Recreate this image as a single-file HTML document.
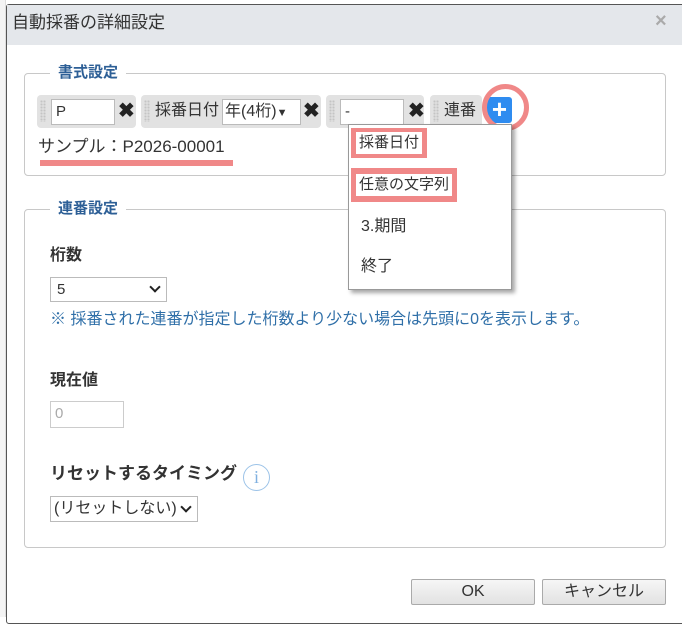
<!DOCTYPE html>
<html><head><meta charset="utf-8"><style>
*{box-sizing:border-box}
body{margin:0;width:682px;height:617px;overflow:hidden;background:#fff;font-family:"Liberation Sans","Noto Sans CJK JP",sans-serif;color:#333;position:relative}
.a{position:absolute}
.dlg{left:6px;top:4px;width:680px;height:620px;border:1px solid #555;background:#fff;border-radius:3px}
.tb{left:7px;top:5px;width:676px;height:40px;background:#e4e7eb}
.fs{border:1px solid #c8c8c8;border-radius:4px}
.lg{background:#fff;padding:0 8px;font-weight:bold;color:#2d5f96;font-size:15px;line-height:20px}
.chip{background:#e2e2e2;border-radius:4px;height:33px;top:95px}
.inp{background:#fff;border:1px solid #bbb;height:26px;top:99px;font-size:15px;line-height:24px;padding-left:4px}
.x{font-size:20px;font-weight:bold;top:98px;line-height:26px;color:#222}
.t{font-size:15px;line-height:20px}
.grip{width:6px;height:22px;top:100px;background:radial-gradient(circle,#c4c4c4 1px,transparent 1.2px) 0 0/3px 3px}
.btn{border:1px solid #aaa;border-radius:2px;background:linear-gradient(#f6f6f6,#e2e2e2);height:26px;top:579px;font-size:16px;text-align:center;line-height:24px}
.hl{background:#f08888;padding:4px 5px}
.hl span{background:#fff;display:block;padding:0 3px;font-size:15px;line-height:22px}
.chev{position:absolute;width:8px;height:8px;border-right:2px solid #222;border-bottom:2px solid #222;transform:rotate(45deg)}
</style></head><body>
<div class="a" style="left:0;top:0;width:6px;height:617px;background:#f4f4f4;border-right:1px solid #ddd"></div>
<div class="a dlg"></div>
<div class="a tb"></div>
<div class="a" style="left:12px;top:12px;font-size:17px;line-height:22px;color:#333">自動採番の詳細設定</div>
<div class="a" style="left:655px;top:10px;font-size:20px;color:#aaa;font-weight:bold">×</div>

<div class="a fs" style="left:24px;top:73px;width:642px;height:103px"></div>
<div class="a lg" style="left:50px;top:63px">書式設定</div>

<div class="a chip" style="left:37px;width:99px"></div>
<div class="a grip" style="left:40px"></div>
<div class="a inp" style="left:51px;width:64px">P</div>
<div class="a x" style="left:118px">✖</div>
<div class="a chip" style="left:141px;width:180px"></div>
<div class="a grip" style="left:144px"></div>
<div class="a t" style="left:155px;top:101px;font-size:16px">採番日付</div>
<div class="a inp" style="left:222px;width:79px;padding-left:2px;font-size:16px">年(4桁)<span style="font-size:11px">▼</span></div>
<div class="a x" style="left:303px">✖</div>
<div class="a chip" style="left:326px;width:98px"></div>
<div class="a grip" style="left:329px"></div>
<div class="a inp" style="left:340px;width:64px">-</div>
<div class="a x" style="left:408px">✖</div>
<div class="a chip" style="left:430px;width:52px"></div>
<div class="a grip" style="left:433px"></div>
<div class="a t" style="left:444px;top:101px;font-size:16px">連番</div>
<div class="a" style="left:487px;top:97px;width:25px;height:26px;background:#2f8cf0;border-radius:3px;color:#fff;font-size:26px;font-weight:bold;text-align:center;line-height:25px">+</div>
<div class="a" style="left:482px;top:84px;width:47px;height:47px;border:5px solid #f08888;border-radius:50%"></div>

<div class="a" style="left:38px;top:136px;font-size:17px;line-height:22px">サンプル：P2026-00001</div>
<div class="a" style="left:40px;top:160px;width:193px;height:6px;background:#f08888"></div>

<div class="a fs" style="left:24px;top:209px;width:642px;height:339px"></div>
<div class="a lg" style="left:50px;top:199px">連番設定</div>

<div class="a" style="left:50px;top:245px;font-size:16px;font-weight:bold;line-height:22px">桁数</div>
<div class="a inp" style="left:50px;top:277px;width:117px;height:25px;font-size:15px;padding-left:6px">5<span class="chev" style="right:7px;top:5px"></span></div>
<div class="a" style="left:50px;top:310px;font-size:16px;color:#2f6fa8;line-height:20px">※ 採番された連番が指定した桁数より少ない場合は先頭に0を表示します。</div>
<div class="a" style="left:50px;top:370px;font-size:16px;font-weight:bold;line-height:22px">現在値</div>
<div class="a inp" style="left:50px;top:401px;width:74px;height:27px;color:#aaa;border-color:#ccc">0</div>
<div class="a" style="left:50px;top:463px;font-size:17px;font-weight:bold;line-height:22px">リセットするタイミング</div>
<div class="a" style="left:243px;top:464px;width:27px;height:27px;border:1px solid #9cc3e8;border-radius:50%;color:#7fb0e0;text-align:center;font-family:'Liberation Serif',serif;font-size:18px;line-height:25px">i</div>
<div class="a inp" style="left:50px;top:496px;width:148px;height:26px;font-size:16px;padding-left:3px">(リセットしない)<span class="chev" style="right:7px;top:6px"></span></div>

<div class="a" style="left:348px;top:124px;width:164px;height:166px;background:#fff;border:1px solid #999;box-shadow:3px 3px 4px rgba(0,0,0,.35)"></div>
<div class="a hl" style="left:351px;top:128px"><span>採番日付</span></div>
<div class="a hl" style="left:351px;top:168px;padding-top:6px;padding-bottom:6px"><span>任意の文字列</span></div>
<div class="a t" style="left:361px;top:217px;font-size:16px">3.期間</div>
<div class="a t" style="left:361px;top:257px;font-size:16px">終了</div>

<div class="a btn" style="left:411px;width:124px">OK</div>
<div class="a btn" style="left:542px;width:124px">キャンセル</div>
</body></html>
